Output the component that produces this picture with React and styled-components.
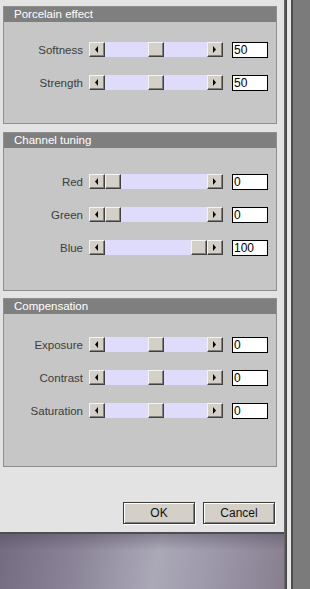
import styled, { createGlobalStyle } from "styled-components";

const Global = createGlobalStyle`
  html, body {
    margin: 0;
    padding: 0;
    background: #7b7b7b;
  }
  body {
    font-family: "Liberation Sans", Arial, sans-serif;
  }
`;

const Screen = styled.div`
  display: flex;
  width: 310px;
  height: 589px;
  overflow: hidden;
`;

const LeftColumn = styled.div`
  width: 284px;
  display: flex;
  flex-direction: column;
`;

const Dialog = styled.div`
  box-sizing: border-box;
  height: 534px;
  background: #e3e3e3;
  border-bottom: 2px solid #4e4e4e;
  padding: 6px 7px 0 3px;
  display: flex;
  flex-direction: column;
`;

const Desktop = styled.div`
  flex: 1;
  background:
    linear-gradient(180deg, rgba(70, 64, 80, 0.35) 0%, rgba(70, 64, 80, 0) 30%),
    linear-gradient(100deg, #736b80 0%, #8c8599 28%, #aba8b8 55%, #9c97a9 75%, #877f90 100%);
`;

const SideStrip = styled.div`
  flex: 1;
  background: linear-gradient(
    90deg,
    #6c6c6c 0px,
    #3e3e3e 3px,
    #e8e8e8 3px,
    #e8e8e8 7px,
    #4c4c4c 7px,
    #4c4c4c 9px,
    #7b7b7b 9px
  );
`;

const Group = styled.div`
  box-sizing: border-box;
  height: ${(p) => p.$height}px;
  margin-bottom: ${(p) => p.$gap || 0}px;
  border: 1px solid #8e8e8e;
  background: #c6c6c6;
  display: flex;
  flex-direction: column;
`;

const GroupTitle = styled.div`
  height: 15px;
  line-height: 15px;
  background: #7f7f7f;
  color: #ffffff;
  font-size: 11.5px;
  padding-left: 10px;
  white-space: nowrap;
`;

const Rows = styled.div`
  padding-top: ${(p) => p.$top}px;
  display: flex;
  flex-direction: column;
`;

const Row = styled.div`
  display: grid;
  grid-template-columns: 79px 134px 36px;
  column-gap: 6px;
  align-items: center;
  height: 33px;

  & > :last-child {
    margin-left: 3px;
  }
`;

const Label = styled.span`
  text-align: right;
  font-size: 11.5px;
  color: #3c3c3c;
  white-space: nowrap;
`;

const Slider = styled.div`
  display: flex;
  height: 15px;
`;

const ArrowButton = styled.div`
  box-sizing: border-box;
  width: 16px;
  height: 15px;
  background: #d4d0c8;
  border-top: 1px solid #f4f4f4;
  border-left: 1px solid #f4f4f4;
  border-right: 1px solid #404040;
  border-bottom: 1px solid #404040;
  box-shadow: inset -1px -1px 0 #808080;
  display: flex;
  align-items: center;
  justify-content: center;

  svg {
    display: block;
  }
`;

const Track = styled.div`
  position: relative;
  flex: 1;
  background: #dedcfa;
`;

const Thumb = styled.div`
  position: absolute;
  top: 0;
  box-sizing: border-box;
  width: 16px;
  height: 15px;
  background: #d4d0c8;
  border-top: 1px solid #f4f4f4;
  border-left: 1px solid #f4f4f4;
  border-right: 1px solid #404040;
  border-bottom: 1px solid #404040;
  box-shadow: inset -1px -1px 0 #808080;
`;

const ValueBox = styled.div`
  box-sizing: border-box;
  width: 36px;
  height: 16px;
  border: 1px solid #000;
  background: #fff;
  font-size: 12px;
  line-height: 14px;
  padding-left: 1px;
  color: #000;
`;

const ButtonRow = styled.div`
  margin-top: 35px;
  display: flex;
  justify-content: flex-end;
  gap: 8px;
  padding-right: 2px;
`;

const Button = styled.div`
  box-sizing: border-box;
  width: 72px;
  height: 22px;
  border: 1px solid #3a3a3a;
  background: #d4d0c8;
  box-shadow: inset 1px 1px 0 #ffffff, inset -1px -1px 0 #808080, 1px 1px 0 #ffffff;
  display: flex;
  align-items: center;
  justify-content: center;
  font-size: 12px;
  color: #111;
`;

const LeftArrow = () => (
  <svg width="4" height="7" viewBox="0 0 4 7">
    <path d="M3 0 L0 3.5 L3 7 Z" fill="#000" />
  </svg>
);

const RightArrow = () => (
  <svg width="4" height="7" viewBox="0 0 4 7">
    <path d="M0 0 L3 3.5 L0 7 Z" fill="#000" />
  </svg>
);

const TRACK = 102;
const THUMB = 16;

const SliderRow = ({ label, value, min = 0, max = 100 }) => {
  const frac = (value - min) / (max - min);
  return (
    <Row>
      <Label>{label}</Label>
      <Slider>
        <ArrowButton>
          <LeftArrow />
        </ArrowButton>
        <Track>
          <Thumb style={{ left: Math.round(frac * (TRACK - THUMB)) }} />
        </Track>
        <ArrowButton>
          <RightArrow />
        </ArrowButton>
      </Slider>
      <ValueBox>{value}</ValueBox>
    </Row>
  );
};

const groups = [
  {
    title: "Porcelain effect",
    height: 118,
    gap: 8,
    top: 11,
    rows: [
      { label: "Softness", value: 50 },
      { label: "Strength", value: 50 },
    ],
  },
  {
    title: "Channel tuning",
    height: 159,
    gap: 7,
    top: 17,
    rows: [
      { label: "Red", value: 0 },
      { label: "Green", value: 0 },
      { label: "Blue", value: 100 },
    ],
  },
  {
    title: "Compensation",
    height: 169,
    gap: 0,
    top: 14,
    rows: [
      { label: "Exposure", value: 0, min: -100 },
      { label: "Contrast", value: 0, min: -100 },
      { label: "Saturation", value: 0, min: -100 },
    ],
  },
];

export default function App() {
  return (
    <>
      <Global />
      <Screen>
        <LeftColumn>
          <Dialog>
            {groups.map((g) => (
              <Group key={g.title} $height={g.height} $gap={g.gap}>
                <GroupTitle>{g.title}</GroupTitle>
                <Rows $top={g.top}>
                  {g.rows.map((r) => (
                    <SliderRow key={r.label} {...r} />
                  ))}
                </Rows>
              </Group>
            ))}
            <ButtonRow>
              <Button>OK</Button>
              <Button>Cancel</Button>
            </ButtonRow>
          </Dialog>
          <Desktop />
        </LeftColumn>
        <SideStrip />
      </Screen>
    </>
  );
}
